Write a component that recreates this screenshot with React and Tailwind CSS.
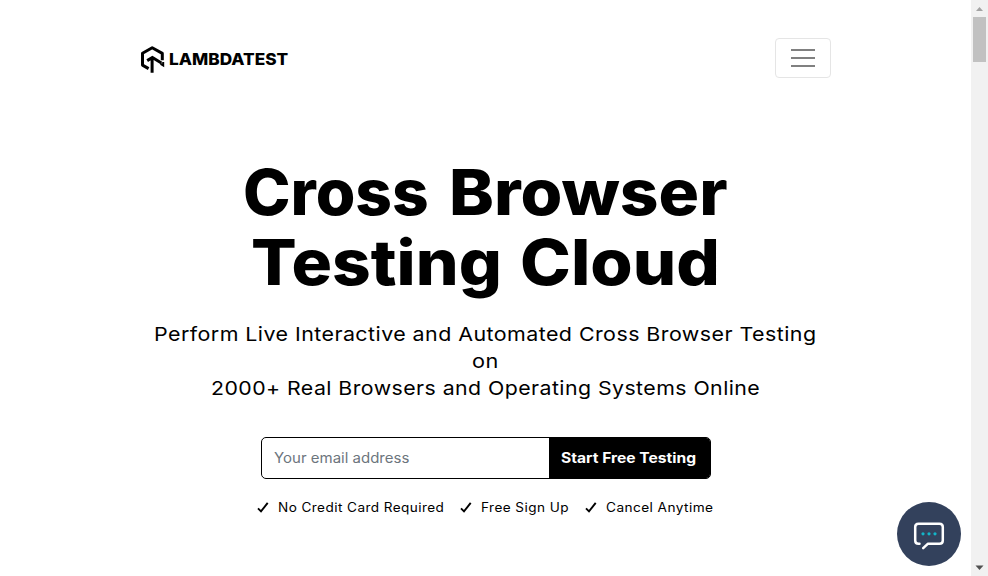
import { useLayoutEffect, useRef, useState } from "react";

// A single run of text stretched horizontally to fill its container.
function FitLine({ className, children }) {
  const outer = useRef(null);
  const inner = useRef(null);
  const [scale, setScale] = useState(1);
  useLayoutEffect(() => {
    setScale(outer.current.clientWidth / inner.current.offsetWidth);
  }, []);
  return (
    <span ref={outer} className={`block whitespace-nowrap text-left ${className}`}>
      <span ref={inner} className="inline-block origin-left" style={{ transform: `scaleX(${scale})` }}>
        {children}
      </span>
    </span>
  );
}

function Logo() {
  return (
    <a className="flex items-center pt-[2px]">
      <svg className="h-[28px] w-[25px]" viewBox="0 0 25 28" fill="none" stroke="#000" strokeWidth="3">
        <path d="M8.6 23.6 2.5 20.1V8.2L12.2 2.7 22.3 8.4V15.2" strokeLinejoin="round" />
        <path d="M12.1 27.8V13.4M7.2 15.6 12.4 12.4 21.4 18" />
        <path d="M20.6 18.8 23.2 20.4V17" strokeWidth="2" />
      </svg>
      <FitLine className="ml-[4px] w-[119px] text-[16.5px] leading-[20px] font-extrabold">LAMBDATEST</FitLine>
    </a>
  );
}

function Perk({ className, children }) {
  return (
    <li className="flex items-center">
      <svg className="mr-[9px] h-[12px] w-[12px]" viewBox="0 0 12 12" fill="none" stroke="#000" strokeWidth="1.9">
        <path d="M1 6.4 4 9.4 10.7 0.8" />
      </svg>
      <FitLine className={`text-[12.5px] leading-[20px] tracking-[0.4px] ${className}`}>{children}</FitLine>
    </li>
  );
}

export default function App() {
  return (
    <div className="flex h-[576px] w-[988px] overflow-hidden bg-white font-['Inter',sans-serif] text-black">
      <main className="relative w-[971px]">
        <header className="mx-auto mt-[38px] flex h-[40px] w-[691px] items-center justify-between">
          <Logo />
          <button className="flex h-[40px] w-[56px] flex-col items-center justify-center gap-[6px] rounded-[4px] border border-[#e5e5e5]">
            <span className="h-[2px] w-[24px] bg-[#808080]" />
            <span className="h-[2px] w-[24px] bg-[#808080]" />
            <span className="h-[2px] w-[24px] bg-[#808080]" />
          </button>
        </header>
        <section className="flex flex-col items-center">
          <h1 className="mt-[79px] flex flex-col items-center text-[63px] leading-[70px] font-extrabold">
            <span className="flex gap-[20px]">
              <FitLine className="w-[186px]">Cross</FitLine>
              <FitLine className="w-[279px]">Browser</FitLine>
            </span>
            <span className="flex gap-[18px]">
              <FitLine className="w-[251px]">Testing</FitLine>
              <FitLine className="w-[200px]">Cloud</FitLine>
            </span>
          </h1>
          <p className="mt-[24px] flex flex-col items-center text-[19.3px] leading-[27px] tracking-[0.4px]">
            <FitLine className="w-[663px]">Perform Live Interactive and Automated Cross Browser Testing</FitLine>
            <FitLine className="w-[27px]">on</FitLine>
            <FitLine className="w-[549px]">2000+ Real Browsers and Operating Systems Online</FitLine>
          </p>
          <form className="mt-[35px] ml-px flex h-[42px] w-[450px] overflow-hidden rounded-[5px] border border-black">
            <label className="flex flex-1 items-center pl-[12px] text-[#6c757d]">
              <FitLine className="w-[135px] text-[14px] leading-[20px]">Your email address</FitLine>
            </label>
            <button type="button" className="flex w-[161px] items-center bg-black pl-[12px] text-white">
              <FitLine className="w-[135px] text-[14px] leading-[20px] font-bold">Start Free Testing</FitLine>
            </button>
          </form>
          <ul className="mt-[19px] flex gap-[16px]">
            <Perk className="w-[166px]">No Credit Card Required</Perk>
            <Perk className="w-[88px]">Free Sign Up</Perk>
            <Perk className="w-[108px]">Cancel Anytime</Perk>
          </ul>
        </section>
        <button className="absolute top-[502px] left-[897px] flex h-[64px] w-[64px] items-center justify-center rounded-full bg-[#33415c]">
          <svg className="h-[64px] w-[64px]" viewBox="0 0 64 64" fill="none">
            <path
              d="M22.5 41.7H21.5Q18.2 41.7 18.2 38.4V25Q18.2 21.7 21.5 21.7H42.5Q45.8 21.7 45.8 25V38.4Q45.8 41.7 42.5 41.7H31L26.2 46.2"
              stroke="#fff" strokeWidth="2.5" strokeLinecap="round" strokeLinejoin="round"
            />
            <circle cx="26" cy="31.8" r="1.6" fill="#13b5c8" />
            <circle cx="32" cy="31.8" r="1.6" fill="#13b5c8" />
            <circle cx="38" cy="31.8" r="1.6" fill="#13b5c8" />
          </svg>
        </button>
      </main>
      <aside className="flex w-[17px] flex-col items-center justify-between bg-[#f1f1f1]">
        <div className="flex flex-col items-center">
          <svg className="h-[17px] w-[17px]" viewBox="0 0 17 17"><path d="M5 11 8.5 7 12 11Z" fill="#a3a3a3" /></svg>
          <div className="h-[45px] w-[13px] bg-[#c1c1c1]" />
        </div>
        <svg className="h-[17px] w-[17px]" viewBox="0 0 17 17"><path d="M4.5 6.5 8.5 11 12.5 6.5Z" fill="#505050" /></svg>
      </aside>
    </div>
  );
}
